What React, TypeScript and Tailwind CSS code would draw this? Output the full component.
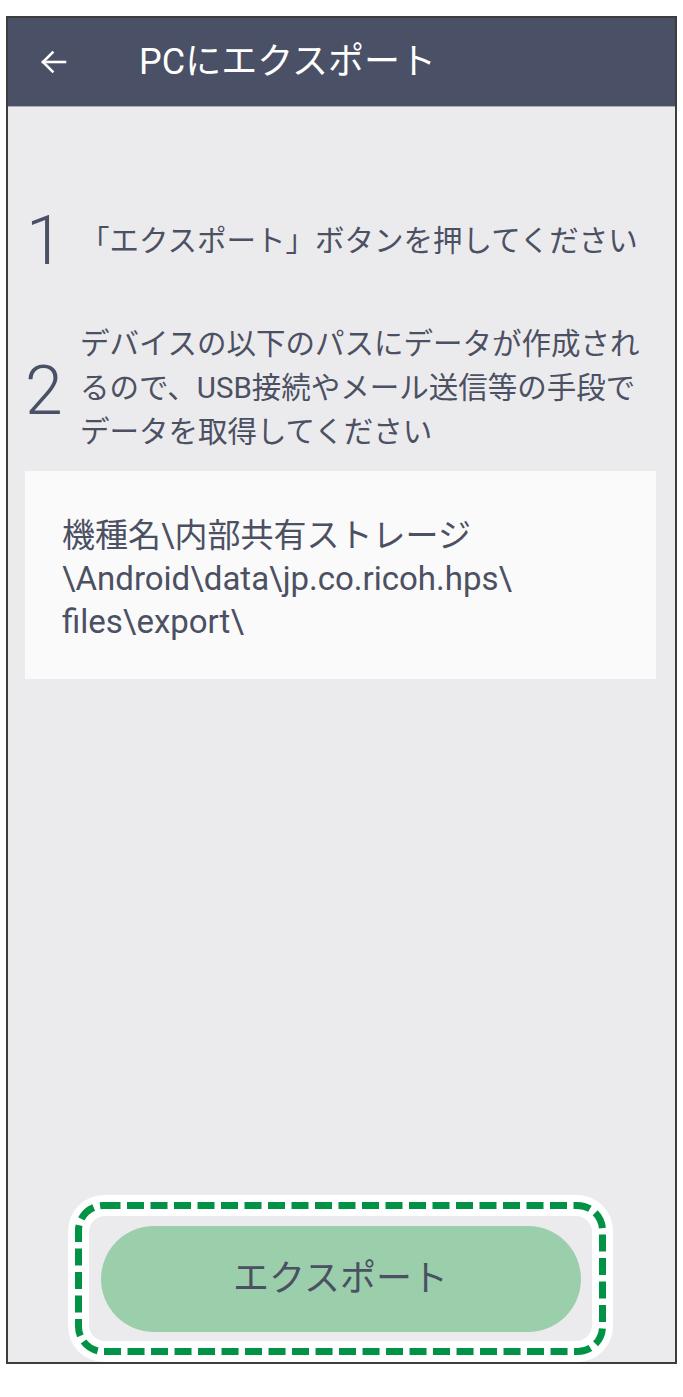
import React from "react"

const font = "font-['Roboto','Noto_Sans_CJK_JP',sans-serif]"

function BackArrow() {
  return (
    <svg width="27" height="24" viewBox="0 0 27 24" fill="none" stroke="white" strokeWidth="2.6" strokeLinecap="square">
      <path d="M25 12H3" />
      <path d="M12.5 2.5L3 12l9.5 9.5" />
    </svg>
  )
}

export default function App() {
  return (
    <div className={`min-h-[1397px] w-[683px] bg-white pt-[16px] ${font}`}>
      <div className="ml-[6px] flex h-[1348px] w-[671px] flex-col border-2 border-[#3d3d3d] bg-[#ebebed]">
        {/* Header */}
        <div className="flex h-[89px] shrink-0 items-center border-b border-[#a9acba] bg-[#4a5066] pl-[32px]">
          <BackArrow />
          <span className="ml-[72px] text-[36px] leading-none text-white">PCにエクスポート</span>
        </div>

        <div className="flex flex-1 flex-col pl-[17px] pr-[19px]">
          {/* Step 1 */}
          <div className="mt-[102px] flex items-center">
            <span className="w-[55px] pl-[1px] text-[68px] font-light leading-[64px] text-[#4a5066]">1</span>
            <span className="whitespace-nowrap text-[29.5px] leading-[44px] text-[#4c5063]">
              「エクスポート」ボタンを押してください
            </span>
          </div>

          {/* Step 2 */}
          <div className="mt-[49px] flex items-center">
            <span className="mt-[6px] w-[55px] text-[68px] font-light leading-[64px] text-[#4a5066]">2</span>
            <span className="whitespace-nowrap text-[29.5px] leading-[44px] text-[#4c5063]">
              デバイスの以下のパスにデータが作成され
              <br />
              るので、USB接続やメール送信等の手段で
              <br />
              データを取得してください
            </span>
          </div>

          {/* Path */}
          <div className="mt-[17px] h-[208px] bg-[#fafafa] pl-[37px] pt-[43px]">
            <p className="whitespace-nowrap text-[33px] leading-[43px] text-[#4c5063]">
              機種名\内部共有ストレージ
              <br />
              \Android\data\jp.co.ricoh.hps\
              <br />
              files\export\
            </p>
          </div>

          <div className="flex-1" />

          {/* Export button with highlight */}
          <div className="ml-[43px] w-[545px] rounded-[36px] bg-white p-[7px]">
            <div className="relative rounded-[28px] p-[14px]">
              <svg className="absolute inset-0" width="531" height="153" viewBox="0 0 531 153" fill="none">
                <rect
                  x="3.5"
                  y="3.5"
                  width="524"
                  height="146"
                  rx="25"
                  stroke="#009245"
                  strokeWidth="7"
                  strokeDasharray="17 6.5"
                />
              </svg>
              <div className="relative flex h-[125px] items-center justify-center rounded-[16px] bg-[#ebebed]">
                <button className="h-[106px] w-[480px] rounded-full bg-[#9bcfab] text-[36px] text-[#4c5063]">
                  エクスポート
                </button>
              </div>
            </div>
          </div>
        </div>
      </div>
    </div>
  )
}
